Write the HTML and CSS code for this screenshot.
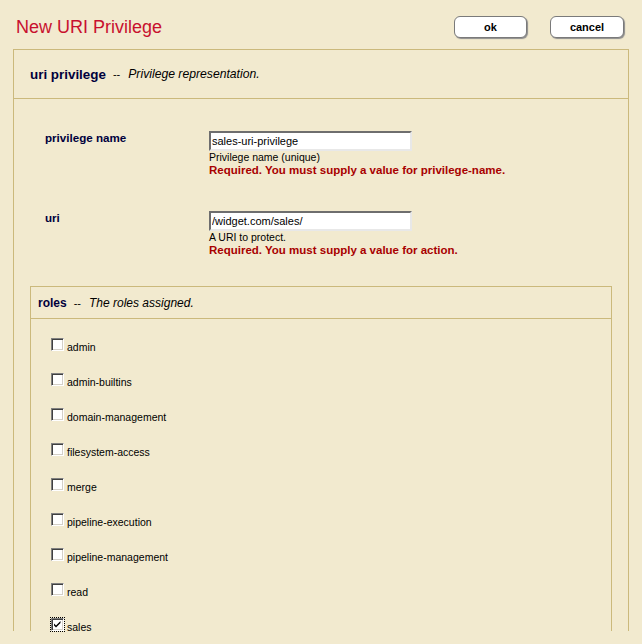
FILE: index.html
```html
<!DOCTYPE html>
<html>
<head>
<meta charset="utf-8">
<link rel="stylesheet" href="styles.css">
</head>
<body>
<div class="topbar">
  <h1 class="title">New URI Privilege</h1>
  <div class="actions">
    <button class="btn btn-ok">ok</button>
    <button class="btn btn-cancel">cancel</button>
  </div>
</div>
<div class="panel">
  <div class="panel-head">
    <span class="head-name">uri privilege</span>
    <span class="head-sep">--</span>
    <span class="head-desc">Privilege representation.</span>
  </div>
  <div class="form">
    <div class="row">
      <div class="label">privilege name</div>
      <div class="field">
        <input class="text" type="text" value="sales-uri-privilege">
        <div class="help">Privilege name (unique)</div>
        <div class="error">Required. You must supply a value for privilege-name.</div>
      </div>
    </div>
    <div class="row row2">
      <div class="label">uri</div>
      <div class="field">
        <input class="text" type="text" value="/widget.com/sales/">
        <div class="help">A URI to protect.</div>
        <div class="error">Required. You must supply a value for action.</div>
      </div>
    </div>
  </div>
  <div class="roles">
    <div class="roles-head">
      <span class="roles-name">roles</span>
      <span class="head-sep">--</span>
      <span class="roles-desc">The roles assigned.</span>
    </div>
    <ul class="role-list">
      <li class="role"><span class="cb"></span><span class="role-label">admin</span></li>
      <li class="role"><span class="cb"></span><span class="role-label">admin-builtins</span></li>
      <li class="role"><span class="cb"></span><span class="role-label">domain-management</span></li>
      <li class="role"><span class="cb"></span><span class="role-label">filesystem-access</span></li>
      <li class="role"><span class="cb"></span><span class="role-label">merge</span></li>
      <li class="role"><span class="cb"></span><span class="role-label">pipeline-execution</span></li>
      <li class="role"><span class="cb"></span><span class="role-label">pipeline-management</span></li>
      <li class="role"><span class="cb"></span><span class="role-label">read</span></li>
      <li class="role"><span class="cb cb-checked"><svg width="11" height="11" viewBox="0 0 11 11"><path d="M2 4.5 L4 6.5 L8.5 2 L8.5 4 L4 8.5 L2 6.5 Z" fill="#000"/></svg></span><span class="role-label">sales</span></li>
    </ul>
  </div>
</div>
</body>
</html>
```
FILE: styles.css
```css
html, body {
  margin: 0;
  padding: 0;
}
body {
  background: #f2eacf;
  font-family: "Liberation Sans", Arial, sans-serif;
  font-size: 11px;
  color: #000;
}
.topbar {
  display: flex;
  justify-content: space-between;
  align-items: flex-start;
  height: 49px;
  box-sizing: border-box;
  padding: 0 18px 0 16px;
}
.title {
  margin: 0;
  padding-top: 17px;
  font-size: 18px;
  line-height: 21px;
  font-weight: normal;
  color: #c8102e;
}
.actions {
  display: flex;
  gap: 23px;
  padding-top: 16px;
}
.btn {
  height: 22px;
  width: 73px;
  background: #fff;
  border: 1px solid #7a7a7a;
  border-radius: 6px;
  box-shadow: 1px 1px 1px #8c8c8c;
  font-family: "Liberation Sans", Arial, sans-serif;
  font-size: 11px;
  font-weight: bold;
  color: #000;
  padding: 0;
}
.btn-cancel {
  width: 74px;
}
.panel {
  margin-left: 13px;
  width: 616px;
  box-sizing: border-box;
  border: 1px solid #cbb97c;
  border-bottom: none;
}
.panel-head {
  height: 49px;
  box-sizing: border-box;
  border-bottom: 1px solid #cbb97c;
  display: flex;
  align-items: center;
  padding-left: 16px;
  color: #00003c;
}
.head-name {
  font-size: 13.4px;
  font-weight: bold;
}
.head-sep {
  font-size: 11px;
  margin: 0 8px 0 7px;
  color: #000;
}
.head-desc {
  font-size: 12.2px;
  font-style: italic;
  color: #000;
}
.form {
  padding: 32px 0 29px 31px;
}
.row {
  display: flex;
}
.row2 {
  margin-top: 34px;
}
.label {
  width: 164px;
  font-weight: bold;
  font-size: 11.6px;
  line-height: 13px;
  color: #00003c;
}
.field {
  display: flex;
  flex-direction: column;
  align-items: flex-start;
  line-height: 13px;
}
.text {
  width: 203px;
  height: 20px;
  box-sizing: border-box;
  margin: 0;
  padding: 0 1px;
  border: 2px solid;
  border-color: #6e6e6e #e8e8e8 #e8e8e8 #6e6e6e;
  background: #fff;
  font-family: "Liberation Sans", Arial, sans-serif;
  font-size: 11px;
  color: #000;
}
.help {
  font-size: 10.5px;
}
.error {
  font-size: 11.5px;
  font-weight: bold;
  color: #a80000;
}
.roles {
  margin: 0 16px;
  border: 1px solid #cbb97c;
  border-bottom: none;
}
.roles-head {
  height: 32px;
  box-sizing: border-box;
  border-bottom: 1px solid #cbb97c;
  display: flex;
  align-items: center;
  padding-left: 7px;
}
.roles-name {
  font-size: 12px;
  font-weight: bold;
  color: #00003c;
}
.roles-desc {
  font-size: 12px;
  font-style: italic;
}
.role-list {
  list-style: none;
  margin: 0;
  padding: 19px 0 0 20px;
}
.role {
  display: flex;
  align-items: flex-end;
  height: 13px;
  margin: 0 0 22px 0;
}
.cb {
  width: 13px;
  height: 13px;
  box-sizing: border-box;
  border: 1px solid;
  border-color: #808080 #ffffff #ffffff #808080;
  box-shadow: inset 1px 1px 0 #404040, inset -1px -1px 0 #d4d0c8;
  background: #fff;
  margin-right: 3px;
  display: flex;
  align-items: center;
  justify-content: center;
  flex-shrink: 0;
}
.cb-checked {
  outline: 1px dotted #000;
  outline-offset: 0;
}
.role-label {
  font-size: 10.5px;
  line-height: 13px;
  position: relative;
  top: 3px;
}
```
